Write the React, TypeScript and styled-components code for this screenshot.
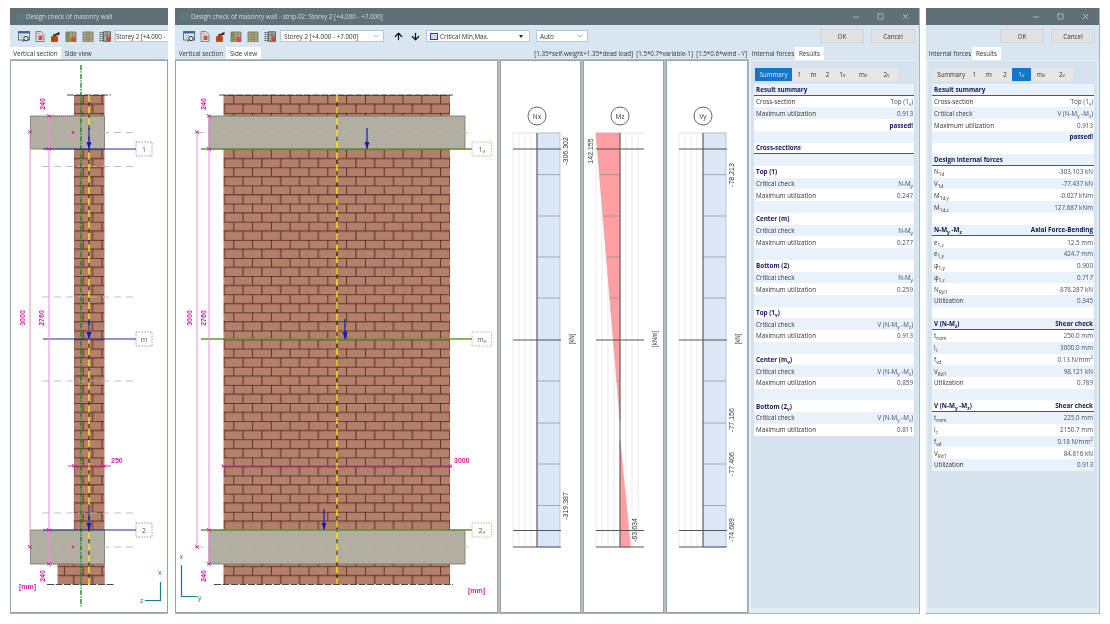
import React from "react";
import styled, { createGlobalStyle } from "styled-components";
import { Minus, Square, X, ArrowUp, ArrowDown, ChevronDown } from "lucide-react";

const GlobalStyle = createGlobalStyle`
  html, body {
    margin: 0;
    background: #fff;
  }
  body {
    font-family: "Open Sans", "Liberation Sans", sans-serif;
    font-size: 6.3px;
    color: #333;
  }
`;

const COL = {
  mag: "#d51ea6",
  pink: "#e88fda",
  blue: "#1717c4",
  navy: "#1f2f9a",
  green: "#5d9a2c",
  teal: "#12808c",
  dash: "#b9b9b1",
};

/* ---------- tables ---------- */

const S = styled.sub`
  font-size: 4.8px;
  line-height: 0;
  vertical-align: -1.5px;
`;

const SupText = styled.sup`
  font-size: 4.8px;
  line-height: 0;
`;

type Row = { l?: React.ReactNode; v?: React.ReactNode; k?: "head" | "title" | "pass" };

const summaryRows: Row[] = [
  { l: "Result summary", k: "head" },
  { l: "Cross-section", v: <>Top (1<S>v</S>)</> },
  { l: "Maximum utilization", v: "0.913" },
  { v: "passed!", k: "pass" },
  {},
  { l: "Cross-sections", k: "head" },
  {},
  { l: "Top (1)", k: "title" },
  { l: "Critical check", v: <>N-M<S>y</S></> },
  { l: "Maximum utilization", v: "0.247" },
  {},
  { l: "Center (m)", k: "title" },
  { l: "Critical check", v: <>N-M<S>y</S></> },
  { l: "Maximum utilization", v: "0.277" },
  {},
  { l: "Bottom (2)", k: "title" },
  { l: "Critical check", v: <>N-M<S>y</S></> },
  { l: "Maximum utilization", v: "0.259" },
  {},
  { l: <>Top (1<S>v</S>)</>, k: "title" },
  { l: "Critical check", v: <>V (N-M<S>y</S> -M<S>z</S>)</> },
  { l: "Maximum utilization", v: "0.913" },
  {},
  { l: <>Center (m<S>v</S>)</>, k: "title" },
  { l: "Critical check", v: <>V (N-M<S>y</S> -M<S>z</S>)</> },
  { l: "Maximum utilization", v: "0.859" },
  {},
  { l: <>Bottom (2<S>v</S>)</>, k: "title" },
  { l: "Critical check", v: <>V (N-M<S>y</S> -M<S>z</S>)</> },
  { l: "Maximum utilization", v: "0.811" },
];

const detailRows: Row[] = [
  { l: "Result summary", k: "head" },
  { l: "Cross-section", v: <>Top (1<S>v</S>)</> },
  { l: "Critical check", v: <>V (N-M<S>y</S> -M<S>z</S>)</> },
  { l: "Maximum utilization", v: "0.913" },
  { v: "passed!", k: "pass" },
  {},
  { l: "Design internal forces", k: "head" },
  { l: <>N<S>1d</S></>, v: "-303.103 kN" },
  { l: <>V<S>1d</S></>, v: "-77.437 kN" },
  { l: <>M<S>1d,y</S></>, v: "-0.027 kNm" },
  { l: <>M<S>1d,z</S></>, v: "127.687 kNm" },
  {},
  { l: <>N-M<S>y</S> -M<S>z</S></>, v: "Axial Force-Bending", k: "head" },
  { l: <>e<S>1,z</S></>, v: "12.5 mm" },
  { l: <>e<S>1,y</S></>, v: "424.7 mm" },
  { l: <>φ<S>1,y</S></>, v: "0.900" },
  { l: <>φ<S>1,z</S></>, v: "0.717" },
  { l: <>N<S>Rd1</S></>, v: "878.287 kN" },
  { l: "Utilization", v: "0.345" },
  {},
  { l: <>V (N-M<S>z</S>)</>, v: "Shear check", k: "head" },
  { l: <>t<S>nom</S></>, v: "250.0 mm" },
  { l: <>l<S>c</S></>, v: "3000.0 mm" },
  { l: <>f<S>vd</S></>, v: <>0.13 N/mm<SupText>2</SupText></> },
  { l: <>V<S>Rd1</S></>, v: "98.121 kN" },
  { l: "Utilization", v: "0.789" },
  {},
  { l: <>V (N-M<S>y</S> -M<S>z</S>)</>, v: "Shear check", k: "head" },
  { l: <>t<S>nom</S></>, v: "225.0 mm" },
  { l: <>l<S>c</S></>, v: "2150.7 mm" },
  { l: <>f<S>vd</S></>, v: <>0.18 N/mm<SupText>2</SupText></> },
  { l: <>V<S>Rd1</S></>, v: "84.816 kN" },
  { l: "Utilization", v: "0.913" },
];

const midTabs = [
  { t: "Summary", w: 37, on: true },
  { t: "1", w: 14 },
  { t: "m", w: 15 },
  { t: "2", w: 13 },
  { t: <>1<S>v</S></>, w: 17 },
  { t: <>m<S>v</S></>, w: 24 },
  { t: <>2<S>v</S></>, w: 23 },
];

const rightTabs = [
  { t: "Summary", w: 36 },
  { t: "1", w: 11 },
  { t: "m", w: 18 },
  { t: "2", w: 14 },
  { t: <>1<S>v</S></>, w: 19, on: true },
  { t: <>m<S>v</S></>, w: 20 },
  { t: <>2<S>v</S></>, w: 22 },
];

function ResultTable({ rows }: { rows: Row[] }) {
  return (
    <Table>
      {rows.map((r, i) => (
        <TableRow key={i} $alt={i % 2 === 0} $head={r.k === "head"}>
          <Label $bold={r.k === "head" || r.k === "title"}>{r.l}</Label>
          <Value $bold={r.k === "head" || r.k === "pass"}>{r.v}</Value>
        </TableRow>
      ))}
    </Table>
  );
}

/* ---------- toolbar icons ---------- */

function ToolIcon({ kind }: { kind: number }) {
  const grid = (
    <>
      <path d="M1 1h10v10H1z" fill="#b9b38a" stroke="#5c5c50" strokeWidth=".7" />
      <path d="M4.3 1v10M7.6 1v10M1 3.5h10M1 6h10M1 8.5h10" stroke="#6a6a58" strokeWidth=".5" />
    </>
  );
  if (kind === 0)
    return (
      <IconSvg width={12} viewBox="0 0 12 11">
        <rect x=".5" y=".5" width="11" height="8.5" fill="#e6eef6" stroke="#5d6f94" />
        <rect x=".5" y=".5" width="11" height="2" fill="#3f62b0" />
        <path d="M2 4.5h4M2 6.5h3" stroke="#8a98b0" strokeWidth=".7" />
        <circle cx="8" cy="7.5" r="2.2" fill="#dfe8ee" stroke="#333" strokeWidth="1" />
        <path d="M6 9.5l-1.5 1" stroke="#333" strokeWidth="1" />
      </IconSvg>
    );
  if (kind === 1)
    return (
      <IconSvg width={10} viewBox="0 0 10 11">
        <path d="M1 .5h5l3 3v7H1z" fill="#e4dcdc" stroke="#6c6c6c" strokeWidth=".8" />
        <rect x="3.5" y="4.5" width="4" height="4.5" fill="#c2574f" />
        <path d="M2.5 2.5h2" stroke="#777" strokeWidth=".7" />
      </IconSvg>
    );
  if (kind === 2)
    return (
      <IconSvg width={10} viewBox="0 0 10 11">
        <rect x="1" y="5" width="7" height="6" fill="#c2541e" />
        <rect x="3" y="3" width="3" height="3" fill="#a8561f" />
        <path d="M4 3.5L9.5 .8v3L4 5z" fill="#3a3028" />
        <path d="M1 8h7M4 5v6" stroke="#7a2f10" strokeWidth=".5" />
      </IconSvg>
    );
  if (kind === 3)
    return (
      <IconSvg width={12} viewBox="0 0 12 11">
        {grid}
        <rect x="1" y="1" width="3.3" height="10" fill="#7d8a4c" opacity=".8" />
        <rect x="6" y="6" width="5" height="5" fill="#bf5b46" />
      </IconSvg>
    );
  if (kind === 4)
    return (
      <IconSvg width={12} viewBox="0 0 12 11">
        {grid}
        <rect x="4.3" y="1" width="3.3" height="10" fill="#8a9060" opacity=".6" />
      </IconSvg>
    );
  return (
    <IconSvg width={12} viewBox="0 0 12 11">
      <path d="M1.2 1v9.5M3.2 1v9.5" stroke="#222" strokeWidth="1" strokeDasharray="1.2 .8" />
      <rect x="4.5" y=".8" width="7" height="9.5" fill="#a9ad9a" stroke="#444" strokeWidth=".7" />
      <path d="M8 .8v9.5M4.5 4h7" stroke="#444" strokeWidth=".5" />
      <rect x="7.5" y="5.5" width="4" height="4.8" fill="#bd4f3f" />
    </IconSvg>
  );
}

function Tools() {
  return (
    <IconRow>
      {[0, 1, 2, 3, 4, 5].map((k) => (
        <ToolIcon key={k} kind={k} />
      ))}
    </IconRow>
  );
}

function TitleBar({ title, controls }: { title: string; controls?: boolean }) {
  return (
    <Title>
      {title && <AppMark />}
      <TitleText>{title}</TitleText>
      {controls && (
        <Controls>
          <Minus size={8} />
          <Square size={7} />
          <X size={9} />
        </Controls>
      )}
    </Title>
  );
}

/* ---------- wall drawings ---------- */

function Tick({ x, y }: { x: number; y: number }) {
  return (
    <path
      d={`M${x - 2} ${y - 2}L${x + 2} ${y + 2}M${x - 2} ${y + 1.2}L${x + 2} ${y - 1.2}`}
      stroke={COL.mag}
      strokeWidth=".9"
    />
  );
}

function Arrow({ x, y0, y1 }: { x: number; y0: number; y1: number }) {
  return (
    <g>
      <line x1={x} y1={y0} x2={x} y2={y1} stroke={COL.blue} strokeWidth="1.2" />
      <path d={`M${x - 2.5} ${y1 - 7}L${x + 2.5} ${y1 - 7}L${x} ${y1}z`} fill={COL.blue} />
    </g>
  );
}

function VText({ x, y, children, color = COL.mag, size = 7, weight = 600 }: {
  x: number;
  y: number;
  children: React.ReactNode;
  color?: string;
  size?: number;
  weight?: number;
}) {
  return (
    <text
      x={x}
      y={y}
      transform={`rotate(-90 ${x} ${y})`}
      textAnchor="middle"
      fontSize={size}
      fontWeight={weight}
      fill={color}
      fontFamily="Liberation Sans, sans-serif"
    >
      {children}
    </text>
  );
}

function Marker({ x, w, y, color, label, sub }: {
  x: number;
  w: number;
  y: number;
  color: string;
  label: string;
  sub?: string;
}) {
  return (
    <g>
      <rect x={x} y={y - 7} width={w} height={14} fill="#fff" stroke={color} strokeWidth=".9" strokeDasharray="1.4 1.4" />
      <text x={x + w / 2} y={y + 2.5} textAnchor="middle" fontSize="7" fill="#555">
        {label}
        {sub && <tspan fontSize="5" dy="1.5">{sub}</tspan>}
      </text>
    </g>
  );
}

function BrickDef({ id, x }: { id: string; x: number }) {
  return (
    <pattern id={id} patternUnits="userSpaceOnUse" x={x} y={94.8} width={18.8} height={18.13}>
      <rect width="18.8" height="18.13" fill="#b4806b" />
      <path d="M0 .3H18.8M0 9.36H18.8M.4 0V9.06M9.8 9.06V18.13" stroke="#43241a" strokeWidth=".9" fill="none" />
    </pattern>
  );
}

function Slab({ x, w, y, h }: { x: number; w: number; y: number; h: number }) {
  return (
    <rect x={x} y={y} width={w} height={h} fill="#b0afa1" stroke="#77776a" strokeWidth=".8" />
  );
}

function GrayDash({ x0, x1, y }: { x0: number; x1: number; y: number }) {
  return <line x1={x0} y1={y} x2={x1} y2={y} stroke={COL.dash} strokeWidth=".9" strokeDasharray="7 5" />;
}

function YellowAxis({ x }: { x: number }) {
  return (
    <g>
      <line x1={x} y1={95} x2={x} y2={584} stroke="#2b2413" strokeWidth=".9" strokeDasharray="4.5 7" strokeDashoffset="-7" />
      <line x1={x} y1={95} x2={x} y2={584} stroke="#ffe21c" strokeWidth="1.4" strokeDasharray="7 4.5" />
    </g>
  );
}

function SideDrawing() {
  return (
    <DrawSvg width={156} height={551} viewBox="11 61 156 551">
      <defs>
        <BrickDef id="brickA" x={82.7} />
      </defs>
      <rect x={74} y={95} width={30.5} height={489} fill="url(#brickA)" />
      <rect x={57.5} y={564} width={47} height={20} fill="url(#brickA)" />
      <Slab x={30.5} w={74} y={116} h={33} />
      <Slab x={30.5} w={74} y={530} h={34} />
      <line x1={67} x2={111} y1={95} y2={95} stroke="#333" strokeWidth=".9" strokeDasharray="7 1.5" />
      <line x1={47} x2={115} y1={584.5} y2={584.5} stroke="#333" strokeWidth=".9" strokeDasharray="7 1.5" />

      <GrayDash x0={30} x1={137} y={132.5} />
      <GrayDash x0={42} x1={137} y={166.5} />
      <GrayDash x0={42} x1={137} y={297} />
      <GrayDash x0={42} x1={137} y={381} />
      <GrayDash x0={42} x1={137} y={513} />
      <GrayDash x0={30} x1={137} y={547} />

      <line x1={81} x2={81} y1={65} y2={608} stroke="#167a22" strokeWidth="1.3" strokeDasharray="5 1.3 1.3 1.3" />
      <YellowAxis x={89} />

      {[149, 339, 530].map((y) => (
        <line key={y} x1={43} x2={136} y1={y} y2={y} stroke={COL.navy} strokeWidth="1.1" />
      ))}
      <Arrow x={89} y0={128} y1={149} />
      <Arrow x={89} y0={319} y1={339} />
      <Arrow x={89} y0={509} y1={530} />
      <Marker x={136} w={16} y={149} color="#8088b0" label="1" />
      <Marker x={136} w={16} y={339} color="#8088b0" label="m" />
      <Marker x={136} w={16} y={530} color="#8088b0" label="2" />

      <line x1={30} x2={30} y1={132} y2={547} stroke={COL.pink} strokeWidth="1" />
      <line x1={49} x2={49} y1={116} y2={564} stroke={COL.pink} strokeWidth="1" />
      <line x1={49} x2={74} y1={116} y2={116} stroke={COL.mag} strokeWidth=".7" strokeDasharray="1 1" />
      <line x1={49} x2={74} y1={564} y2={564} stroke={COL.mag} strokeWidth=".7" strokeDasharray="1 1" />
      <line x1={74} x2={74} y1={466} y2={530} stroke={COL.mag} strokeWidth=".5" strokeDasharray="1 1" />
      <line x1={68} x2={111} y1={466} y2={466} stroke={COL.mag} strokeWidth=".9" />
      <Tick x={30} y={132} />
      <Tick x={30} y={547} />
      <Tick x={49} y={116} />
      <Tick x={49} y={149} />
      <Tick x={49} y={530} />
      <Tick x={49} y={564} />
      <Tick x={74} y={466} />
      <Tick x={104} y={466} />
      <circle cx={73} cy={132.5} r={1.2} fill={COL.mag} />
      <circle cx={73} cy={547} r={1.2} fill={COL.mag} />

      <VText x={25} y={318}>3000</VText>
      <VText x={44} y={318}>2760</VText>
      <VText x={45} y={104}>240</VText>
      <VText x={45} y={576}>240</VText>
      <text x={111} y={463} fontSize="7" fontWeight="600" fill={COL.mag} fontFamily="Liberation Sans, sans-serif">250</text>
      <text x={19} y={589} fontSize="7" fontWeight="600" fill={COL.mag} fontFamily="Liberation Sans, sans-serif">[mm]</text>

      <path d="M160.5 582V600.5H145" fill="none" stroke={COL.teal} strokeWidth="1.2" />
      <text x={158} y={575} fontSize="7" fill={COL.teal}>x</text>
      <text x={140} y={603} fontSize="7" fill={COL.teal}>z</text>
    </DrawSvg>
  );
}

function FrontDrawing() {
  return (
    <DrawSvg width={321} height={551} viewBox="176 61 321 551">
      <defs>
        <BrickDef id="brickB" x={233.3} />
      </defs>
      <rect x={223.5} y={95} width={226.5} height={489} fill="url(#brickB)" />
      <Slab x={209} w={256} y={116} h={33} />
      <Slab x={209} w={256} y={530} h={34} />
      <line x1={219} x2={453} y1={95} y2={95} stroke="#333" strokeWidth=".9" strokeDasharray="7 1.5" />
      <line x1={214} x2={453} y1={584.5} y2={584.5} stroke="#333" strokeWidth=".9" strokeDasharray="7 1.5" />

      <GrayDash x0={197} x1={472} y={132.5} />
      <GrayDash x0={197} x1={472} y={547} />
      <YellowAxis x={337} />

      {[149, 339, 530].map((y) => (
        <line key={y} x1={201} x2={472} y1={y} y2={y} stroke={COL.green} strokeWidth="1.3" />
      ))}
      <Arrow x={367} y0={128} y1={149} />
      <Arrow x={345} y0={319} y1={339} />
      <Arrow x={324} y0={509} y1={530} />
      <Marker x={472} w={19.5} y={149} color="#8fbd77" label="1" sub="v" />
      <Marker x={472} w={19.5} y={339} color="#8fbd77" label="m" sub="v" />
      <Marker x={472} w={19.5} y={530} color="#8fbd77" label="2" sub="v" />

      <line x1={197} x2={197} y1={132} y2={547} stroke={COL.pink} strokeWidth="1" />
      <line x1={209} x2={209} y1={116} y2={564} stroke={COL.pink} strokeWidth="1" />
      <line x1={222} x2={452} y1={466} y2={466} stroke={COL.mag} strokeWidth=".9" />
      <Tick x={197} y={132} />
      <Tick x={197} y={547} />
      <Tick x={209} y={116} />
      <Tick x={209} y={149} />
      <Tick x={209} y={530} />
      <Tick x={209} y={564} />
      <Tick x={223.5} y={466} />
      <Tick x={450} y={466} />

      <VText x={192} y={318}>3000</VText>
      <VText x={206} y={318}>2760</VText>
      <VText x={206} y={104}>240</VText>
      <VText x={206} y={576}>240</VText>
      <text x={454} y={463} fontSize="7" fontWeight="600" fill={COL.mag} fontFamily="Liberation Sans, sans-serif">3000</text>
      <text x={468} y={593} fontSize="7" fontWeight="600" fill={COL.mag} fontFamily="Liberation Sans, sans-serif">[mm]</text>

      <path d="M181.5 565V596.5H197" fill="none" stroke={COL.teal} strokeWidth="1.2" />
      <text x={179.5} y={559} fontSize="7" fill={COL.teal}>x</text>
      <text x={198} y={600} fontSize="7" fill={COL.teal}>y</text>
    </DrawSvg>
  );
}

/* ---------- force diagrams ---------- */

const thinLines = [174.6, 216, 257, 298, 381, 423, 464, 505.5];
const darkLines = [149, 340, 530.5, 547];

type Diagram = {
  vx: number;
  width: number;
  axis: number;
  name: string;
  unit: string;
  unitX: number;
  shape: string;
  fill: string;
  labels: { x: number; y: number; t: string }[];
};

const diagrams: Diagram[] = [
  {
    vx: 501,
    width: 79,
    axis: 537,
    name: "Nx",
    unit: "[kN]",
    unitX: 574,
    shape: "M537 133H560V547H537z",
    fill: "#dbe6f6",
    labels: [
      { x: 567.5, y: 151, t: "-306.302" },
      { x: 567.5, y: 506, t: "-319.387" },
    ],
  },
  {
    vx: 584,
    width: 79,
    axis: 620,
    name: "Mz",
    unit: "[kNm]",
    unitX: 657,
    shape: "M596 133H620V420zM620 440L630.5 547H620z",
    fill: "#ff9fa3",
    labels: [
      { x: 593, y: 151, t: "142.155" },
      { x: 636.5, y: 530, t: "-63.634" },
    ],
  },
  {
    vx: 667,
    width: 80,
    axis: 703,
    name: "Vy",
    unit: "[kN]",
    unitX: 740,
    shape: "M703 133H726V547H703z",
    fill: "#dbe6f6",
    labels: [
      { x: 733.5, y: 175, t: "-78.213" },
      { x: 733.5, y: 420, t: "-77.156" },
      { x: 733.5, y: 464, t: "-77.406" },
      { x: 733.5, y: 530, t: "-74.689" },
    ],
  },
];

function ForcePane({ d }: { d: Diagram }) {
  const left = d.axis - 24;
  const right = d.axis + 24;
  const grid = [0, 6, 12, 18, 30, 36, 42].map((n) => left + n);
  const isBar = d.name !== "Mz";
  return (
    <Pane $w={d.width + 2}>
      <DrawSvg width={d.width} height={551} viewBox={`${d.vx} 61 ${d.width} 551`}>
        {grid.map((x) => (
          <line key={x} x1={x} x2={x} y1={133} y2={547} stroke="#e6e6e6" strokeWidth=".8" />
        ))}
        <line x1={left} x2={right} y1={133} y2={133} stroke="#ddd" strokeWidth=".8" />
        <path d={d.shape} fill={d.fill} stroke={isBar ? "#9db0c8" : "#e89aa0"} strokeWidth=".6" />
        {thinLines.map((y) => {
          const half = isBar ? 23 : Math.max(0, ((420 - y) / 287) * 24);
          return (
            <line key={y} x1={d.axis - (isBar ? 0 : half)} x2={d.axis + (isBar ? half : 0)} y1={y} y2={y} stroke="#8d8d9a" strokeWidth=".7" />
          );
        })}
        {darkLines.map((y) => (
          <line key={y} x1={left} x2={right} y1={y} y2={y} stroke="#444" strokeWidth=".9" />
        ))}
        <line x1={d.axis} x2={d.axis} y1={133} y2={547} stroke="#555" strokeWidth="1" />
        <circle cx={d.axis} cy={116} r={9} fill="#fff" stroke="#555" strokeWidth=".9" />
        <text x={d.axis} y={118.5} textAnchor="middle" fontSize="6.5" fill="#333">
          {d.name}
        </text>
        {d.labels.map((l) => (
          <VText key={l.t} x={l.x} y={l.y} size={7} weight={400} color="#333">
            {l.t}
          </VText>
        ))}
        <VText x={d.unitX} y={339} size={6.3} weight={400} color="#444">
          {d.unit}
        </VText>
      </DrawSvg>
    </Pane>
  );
}

function ResultPanel({ tabs, rows, narrow }: {
  tabs: { t: React.ReactNode; w: number; on?: boolean }[];
  rows: Row[];
  narrow?: boolean;
}) {
  return (
    <Side $narrow={narrow}>
      <SegRow>
        {tabs.map((t, i) => (
          <Seg key={i} $w={t.w} $on={t.on}>
            {t.t}
          </Seg>
        ))}
      </SegRow>
      <ResultTable rows={rows} />
    </Side>
  );
}

export default function App() {
  return (
    <Page>
      <GlobalStyle />

      <Window $w={158}>
        <TitleBar title="Design check of masonry wall" />
        <Toolbar>
          <Tools />
          <CutCombo $w={53}>Storey 2 [+4.000 -</CutCombo>
        </Toolbar>
        <TabRow>
          <Tab $on $w={51}>Vertical section</Tab>
          <Tab $w={34}>Side view</Tab>
        </TabRow>
        <Body>
          <Pane $grow>
            <SideDrawing />
          </Pane>
        </Body>
      </Window>

      <Window $w={745} $ml={7} $framed>
        <TitleBar title="Design check of masonry wall - strip-02: Storey 2 [+4.000 - +7.000]" controls />
        <Toolbar>
          <Tools />
          <Combo $w={104}>
            Storey 2 [+4.000 - +7.000]
            <Chevron size={8} />
          </Combo>
          <ArrowGroup>
            <ArrowUp size={11} strokeWidth={2.6} />
            <ArrowDown size={11} strokeWidth={2.6} />
          </ArrowGroup>
          <Combo $w={104}>
            <Swatch />
            Critical Min,Max.
            <Caret />
          </Combo>
          <Combo $w={52} $ml={6}>
            Auto
            <Chevron size={8} />
          </Combo>
          <ButtonGroup>
            <DialogButton>OK</DialogButton>
            <DialogButton>Cancel</DialogButton>
          </ButtonGroup>
        </Toolbar>
        <TabRow>
          <TabSplit>
            <Tab $w={50}>Vertical section</Tab>
            <Tab $on $w={35}>Side view</Tab>
            <Combination>
              [1.35*self-weight+1.35*dead load]&nbsp; [1.5*0.7*variable-1]&nbsp; [1.5*0.6*wind - Y]
            </Combination>
          </TabSplit>
          <Tab $w={44} $ml={3}>Internal forces</Tab>
          <Tab $on $w={29}>Results</Tab>
        </TabRow>
        <Body>
          <Pane $w={323}>
            <FrontDrawing />
          </Pane>
          {diagrams.map((d) => (
            <ForcePane key={d.name} d={d} />
          ))}
          <ResultPanel tabs={midTabs} rows={summaryRows} />
        </Body>
      </Window>

      <Window $w={174} $ml={6} $framed>
        <TitleBar title="" controls />
        <Toolbar>
          <ButtonGroup>
            <DialogButton>OK</DialogButton>
            <DialogButton>Cancel</DialogButton>
          </ButtonGroup>
        </Toolbar>
        <TabRow>
          <Tab $w={44} $ml={2}>Internal forces</Tab>
          <Tab $on $w={29}>Results</Tab>
        </TabRow>
        <Body>
          <ResultPanel tabs={rightTabs} rows={detailRows} narrow />
        </Body>
      </Window>
    </Page>
  );
}

const Page = styled.div`
  display: flex;
  align-items: flex-start;
  width: 1110px;
  height: 624px;
  box-sizing: border-box;
  padding: 8px 10px;
  overflow: hidden;
  background: #fff;
  filter: blur(0.3px);
`;

const Window = styled.div<{ $w: number; $ml?: number; $framed?: boolean }>`
  display: flex;
  flex-direction: column;
  flex: none;
  width: ${(p) => p.$w}px;
  height: 606px;
  margin-left: ${(p) => p.$ml ?? 0}px;
  box-sizing: border-box;
  overflow: hidden;
  background: #d7e6f1;
  border-bottom: 1px solid #aab3b6;
  border-right: ${(p) => (p.$framed ? "1px solid #aab3b6" : "none")};
`;

const Title = styled.div`
  display: flex;
  align-items: center;
  flex: none;
  height: 17px;
  padding-left: 6px;
  background: #5f7177;
`;

const AppMark = styled.span`
  width: 8px;
  height: 7px;
  margin-right: 2px;
  background: #55807a;
  opacity: 0.7;
`;

const TitleText = styled.span`
  color: #d3dcde;
  white-space: nowrap;
`;

const Controls = styled.div`
  display: flex;
  align-items: center;
  gap: 17px;
  margin-left: auto;
  padding-right: 9px;
  color: #d7e0e2;
`;

const Toolbar = styled.div`
  display: flex;
  align-items: center;
  flex: none;
  height: 22px;
  padding-left: 8px;
`;

const IconRow = styled.div`
  display: flex;
  align-items: center;
  gap: 5px;
  width: 97px;
  flex: none;
`;

const IconSvg = styled.svg`
  display: block;
  height: 11px;
  flex: none;
`;

const Combo = styled.div<{ $w: number; $ml?: number }>`
  display: flex;
  align-items: center;
  flex: none;
  width: ${(p) => p.$w}px;
  height: 11.5px;
  margin-left: ${(p) => p.$ml ?? 0}px;
  padding: 0 3px;
  box-sizing: border-box;
  background: #fff;
  border: 1px solid #b9c6cf;
  white-space: nowrap;
`;

const CutCombo = styled(Combo)`
  padding: 0;
  letter-spacing: -0.1px;
  border-right: none;
`;

const Chevron = styled(ChevronDown)`
  margin-left: auto;
  color: #7b8a94;
  flex: none;
`;

const Caret = styled.span`
  margin-left: auto;
  margin-right: 3px;
  border-left: 2px solid transparent;
  border-right: 2px solid transparent;
  border-top: 3px solid #222;
`;

const Swatch = styled.span`
  width: 6px;
  height: 5px;
  margin-right: 2px;
  border: 1px solid #2d3fb8;
  background: #cfd6f4;
  flex: none;
`;

const ArrowGroup = styled.div`
  display: flex;
  align-items: center;
  gap: 6px;
  width: 42px;
  padding-left: 3px;
  box-sizing: border-box;
  justify-content: center;
  flex: none;
  color: #111;
`;

const ButtonGroup = styled.div`
  display: flex;
  gap: 7px;
  margin-left: auto;
  padding-right: 4px;
`;

const DialogButton = styled.div`
  display: flex;
  align-items: center;
  justify-content: center;
  width: 44px;
  height: 13.5px;
  box-sizing: border-box;
  background: #e2e2e2;
  border: 1px solid #d2d5d7;
`;

const TabRow = styled.div`
  display: flex;
  align-items: stretch;
  flex: none;
  height: 13px;
`;

const TabSplit = styled.div`
  display: flex;
  align-items: stretch;
  flex: none;
  width: 573px;
  padding-left: 1px;
  box-sizing: border-box;
`;

const Tab = styled.div<{ $w: number; $on?: boolean; $ml?: number }>`
  display: flex;
  align-items: center;
  justify-content: center;
  flex: none;
  width: ${(p) => p.$w}px;
  margin-left: ${(p) => p.$ml ?? 0}px;
  background: ${(p) => (p.$on ? "#fff" : "transparent")};
  white-space: nowrap;
`;

const Combination = styled.div`
  display: flex;
  align-items: center;
  margin-left: auto;
  padding-right: 1px;
  font-size: 6.2px;
  white-space: nowrap;
`;

const Body = styled.div`
  display: flex;
  flex: 1;
  min-height: 0;
  gap: 2px;
  background: #e2ecf3;
`;

const Pane = styled.div<{ $w?: number; $grow?: boolean }>`
  flex: ${(p) => (p.$grow ? "1" : "none")};
  width: ${(p) => (p.$w ? `${p.$w}px` : "auto")};
  box-sizing: border-box;
  background: #fff;
  border: 1px solid #98a3a7;
  box-shadow: 0 0 0 1px #b4bec2;
`;

const DrawSvg = styled.svg`
  display: block;
`;

const Side = styled.div<{ $narrow?: boolean }>`
  display: flex;
  flex-direction: column;
  flex: 1;
  margin: ${(p) => (p.$narrow ? "1px 2px 5px 2px" : "1px 1px 5px 1px")};
  padding: ${(p) => (p.$narrow ? "7px 3px 0 4px" : "7px 4px 0 3px")};
  background: #d4e3ee;
`;

const SegRow = styled.div`
  display: flex;
  height: 13px;
  margin: 0 0 3px 1px;
  flex: none;
`;

const Seg = styled.div<{ $w: number; $on?: boolean }>`
  display: flex;
  align-items: center;
  justify-content: center;
  width: ${(p) => p.$w}px;
  background: ${(p) => (p.$on ? "#1576c9" : "#e6e6e6")};
  color: ${(p) => (p.$on ? "#d5e9fa" : "#333")};
`;

const Table = styled.div`
  display: flex;
  flex-direction: column;
`;

const TableRow = styled.div<{ $alt: boolean; $head: boolean }>`
  display: flex;
  align-items: center;
  justify-content: space-between;
  height: 11.72px;
  padding: 0 1px 0 2px;
  box-sizing: border-box;
  background: ${(p) => (p.$alt ? "#e9f2fa" : "#fff")};
  border-bottom: ${(p) => (p.$head ? "1px solid #555" : "none")};
  white-space: nowrap;
`;

const Label = styled.span<{ $bold: boolean }>`
  font-weight: ${(p) => (p.$bold ? 700 : 400)};
  color: ${(p) => (p.$bold ? "#14145e" : "#333")};
`;

const Value = styled.span<{ $bold: boolean }>`
  font-weight: ${(p) => (p.$bold ? 700 : 400)};
  color: ${(p) => (p.$bold ? "#14145e" : "#3d4a74")};
`;
